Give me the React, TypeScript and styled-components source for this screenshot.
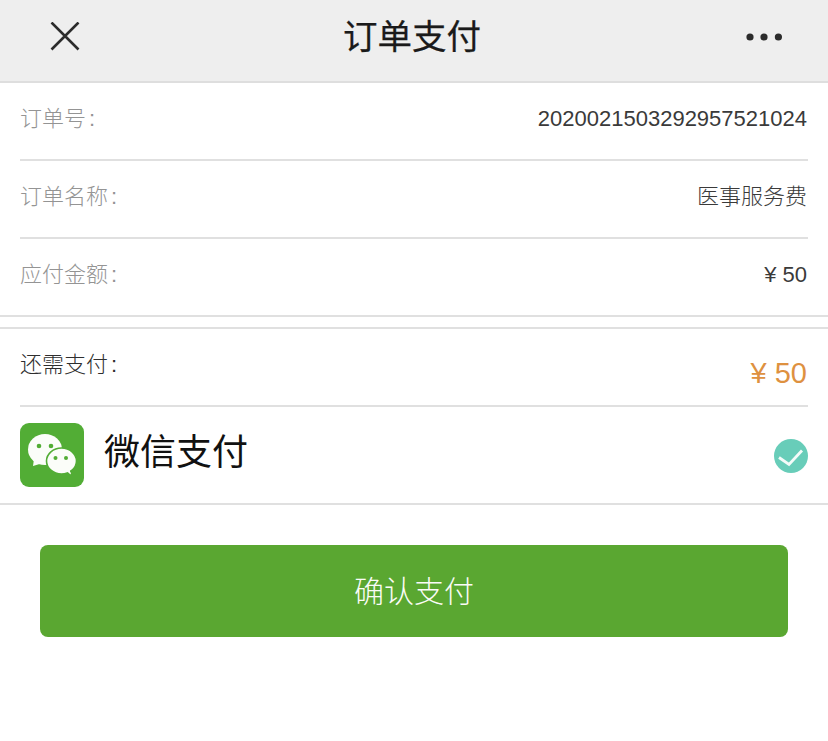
import React from 'react';
import styled, { createGlobalStyle } from 'styled-components';

const GlobalStyle = createGlobalStyle`
  html, body {
    margin: 0;
    padding: 0;
    background: #fff;
  }
  body {
    font-family: "Liberation Sans", "Noto Sans CJK SC", sans-serif;
  }
`;

const Page = styled.div`
  width: 828px;
  height: 741px;
  overflow: hidden;
  background: #fff;
`;

const Header = styled.header`
  height: 73px;
  display: flex;
  align-items: center;
  padding: 0 46px 8px 50px;
  background: #eeeeee;
  border-bottom: 2px solid #dedede;
`;

const HeaderButton = styled.div<{ $width: number }>`
  width: ${(p) => p.$width}px;
  height: 34px;
  display: flex;
  align-items: center;
  color: #2b2b2b;
`;

const Title = styled.h1`
  flex: 1;
  margin: 0;
  text-align: center;
  font-size: 34.5px;
  line-height: 40px;
  font-weight: 400;
  color: #1a1a1a;
  -webkit-text-stroke: 0.25px #1a1a1a;
`;

const Section = styled.section`
  padding: 0 20px;
  border-bottom: 2px solid #e0e0e0;
`;

const Row = styled.div<{ $last?: boolean }>`
  height: 54px;
  padding-top: 22px;
  display: flex;
  justify-content: space-between;
  align-items: flex-start;
  border-bottom: ${(p) => (p.$last ? 'none' : '2px solid #e0e0e0')};
`;

const Label = styled.span<{ $dark?: boolean }>`
  font-size: 22px;
  line-height: 28px;
  font-weight: 300;
  color: ${(p) => (p.$dark ? '#2e2e2e' : '#949494')};
`;

const Colon = styled.span`
  margin-left: 3px;
`;

const Value = styled.span`
  margin-right: 1px;
  font-size: 22px;
  line-height: 28px;
  font-weight: 300;
  color: #3a3a3a;
`;

const Gap = styled.div`
  height: 10px;
`;

const DueSection = styled.section`
  border-top: 2px solid #e0e0e0;
`;

const DueRow = styled.div`
  margin: 0 20px;
  height: 54px;
  padding-top: 22px;
  display: flex;
  justify-content: space-between;
  align-items: flex-start;
  border-bottom: 2px solid #e0e0e0;
`;

const Price = styled.span`
  margin-right: 1px;
  font-size: 29px;
  line-height: 44px;
  color: #de9140;
`;

const PayRow = styled.div`
  height: 96px;
  padding: 0 20px;
  display: flex;
  align-items: center;
  justify-content: space-between;
  border-bottom: 2px solid #e0e0e0;
`;

const PayMethod = styled.div`
  display: flex;
  align-items: center;
  gap: 20px;
`;

const PayName = styled.span`
  font-size: 36px;
  line-height: 44px;
  font-weight: 400;
  color: #111;
  padding-bottom: 4px;
`;

const WechatIcon = styled.svg`
  width: 64px;
  height: 64px;
  display: block;
`;

const CheckIcon = styled.svg`
  width: 34px;
  height: 34px;
  display: block;
  margin-top: 2px;
`;

const ConfirmButton = styled.button`
  display: block;
  width: 748px;
  height: 92px;
  margin: 40px 40px 0;
  padding: 0 0 4px;
  border: none;
  border-radius: 8px;
  background: #5aa731;
  color: #fafcf7;
  font-family: inherit;
  font-size: 30px;
  font-weight: 300;
`;

function CloseGlyph() {
  return (
    <svg width="30" height="30" viewBox="0 1 30 30" fill="none" stroke="currentColor" strokeWidth="2.6">
      <path d="M1.5 1.5 L28.5 28.5 M28.5 1.5 L1.5 28.5" />
    </svg>
  );
}

function MoreGlyph() {
  return (
    <svg width="38" height="10" viewBox="0 0 38 10" fill="currentColor">
      <circle cx="6" cy="5" r="3.6" />
      <circle cx="20" cy="5" r="3.6" />
      <circle cx="34.4" cy="5" r="3.6" />
    </svg>
  );
}

function WechatLogo() {
  return (
    <WechatIcon viewBox="0 0 64 64">
      <rect width="64" height="64" rx="9" fill="#52ad35" />
      <ellipse cx="25" cy="26.5" rx="17" ry="15.5" fill="#fbfdf9" />
      <path d="M14 36 L13 43 L23 40 Z" fill="#fbfdf9" />
      <path d="M44 46 L51 51.5 L49.5 44 Z" fill="#fbfdf9" />
      <ellipse cx="41.5" cy="38" rx="15" ry="13" fill="#fbfdf9" stroke="#52ad35" strokeWidth="1.6" />
      <path d="M46 48 L50.5 51 L49.6 46 Z" fill="#fbfdf9" />
      <circle cx="19" cy="23" r="2.3" fill="#52ad35" />
      <circle cx="31" cy="23" r="2.3" fill="#52ad35" />
      <circle cx="35.5" cy="35" r="2" fill="#52ad35" />
      <circle cx="46" cy="35" r="2" fill="#52ad35" />
    </WechatIcon>
  );
}

function CheckedMark() {
  return (
    <CheckIcon viewBox="0 0 34 34">
      <circle cx="17" cy="17" r="17" fill="#68cdb9" />
      <path d="M5 18.5 L15 25.5 L28 11.5" fill="none" stroke="#f4fbf9" strokeWidth="2.8" />
    </CheckIcon>
  );
}

const orderRows = [
  { label: '订单号', value: '2020021503292957521024' },
  { label: '订单名称', value: '医事服务费' },
  { label: '应付金额', value: '¥ 50' },
];

export default function App() {
  return (
    <Page>
      <GlobalStyle />
      <Header>
        <HeaderButton $width={30}>
          <CloseGlyph />
        </HeaderButton>
        <Title>订单支付</Title>
        <HeaderButton $width={38}>
          <MoreGlyph />
        </HeaderButton>
      </Header>
      <Section>
        {orderRows.map((row, index) => (
          <Row key={row.label} $last={index === orderRows.length - 1}>
            <Label>
              {row.label}
              <Colon>:</Colon>
            </Label>
            <Value>{row.value}</Value>
          </Row>
        ))}
      </Section>
      <Gap />
      <DueSection>
        <DueRow>
          <Label $dark>
            还需支付
            <Colon>:</Colon>
          </Label>
          <Price>¥ 50</Price>
        </DueRow>
        <PayRow>
          <PayMethod>
            <WechatLogo />
            <PayName>微信支付</PayName>
          </PayMethod>
          <CheckedMark />
        </PayRow>
      </DueSection>
      <ConfirmButton>确认支付</ConfirmButton>
    </Page>
  );
}
